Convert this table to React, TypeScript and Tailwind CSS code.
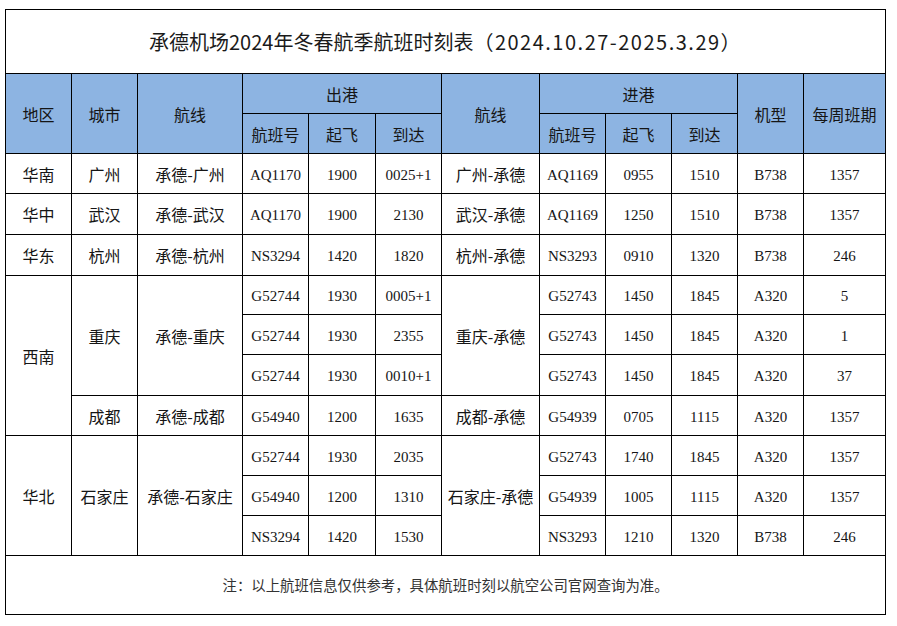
/**
 * 承德机场 冬春航季航班时刻表
 */
const zh = "[font-family:'Noto_Sans_CJK_SC',sans-serif] text-[16px]"
const num = "[font-family:'Liberation_Serif','Noto_Sans_CJK_SC',serif] text-[15px] pt-[3px]"
const cell = 'border border-black p-0 text-center align-middle text-[#151515] leading-none'

type Row = { h: number; cells: { t: string; rs?: number; n?: boolean; c?: string }[] }

const rows: Row[] = [
    { h: 40, cells: [{ t: '华南' }, { t: '广州', c: 'text-[#444]' }, { t: '承德-广州' }, { t: 'AQ1170', n: true }, { t: '1900', n: true }, { t: '0025+1', n: true }, { t: '广州-承德' }, { t: 'AQ1169', n: true }, { t: '0955', n: true }, { t: '1510', n: true }, { t: 'B738', n: true }, { t: '1357', n: true }] },
    { h: 41, cells: [{ t: '华中' }, { t: '武汉' }, { t: '承德-武汉' }, { t: 'AQ1170', n: true }, { t: '1900', n: true }, { t: '2130', n: true }, { t: '武汉-承德' }, { t: 'AQ1169', n: true }, { t: '1250', n: true }, { t: '1510', n: true }, { t: 'B738', n: true }, { t: '1357', n: true }] },
    { h: 41, cells: [{ t: '华东' }, { t: '杭州', c: 'text-[#444]' }, { t: '承德-杭州' }, { t: 'NS3294', n: true }, { t: '1420', n: true }, { t: '1820', n: true }, { t: '杭州-承德' }, { t: 'NS3293', n: true }, { t: '0910', n: true }, { t: '1320', n: true }, { t: 'B738', n: true }, { t: '246', n: true }] },
    { h: 39, cells: [{ t: '西南', rs: 4 }, { t: '重庆', rs: 3 }, { t: '承德-重庆', rs: 3 }, { t: 'G52744', n: true }, { t: '1930', n: true }, { t: '0005+1', n: true }, { t: '重庆-承德', rs: 3 }, { t: 'G52743', n: true }, { t: '1450', n: true }, { t: '1845', n: true }, { t: 'A320', n: true }, { t: '5', n: true }] },
    { h: 40, cells: [{ t: 'G52744', n: true }, { t: '1930', n: true }, { t: '2355', n: true }, { t: 'G52743', n: true }, { t: '1450', n: true }, { t: '1845', n: true }, { t: 'A320', n: true }, { t: '1', n: true }] },
    { h: 41, cells: [{ t: 'G52744', n: true }, { t: '1930', n: true }, { t: '0010+1', n: true }, { t: 'G52743', n: true }, { t: '1450', n: true }, { t: '1845', n: true }, { t: 'A320', n: true }, { t: '37', n: true }] },
    { h: 40, cells: [{ t: '成都' }, { t: '承德-成都' }, { t: 'G54940', n: true }, { t: '1200', n: true }, { t: '1635', n: true }, { t: '成都-承德' }, { t: 'G54939', n: true }, { t: '0705', n: true }, { t: '1115', n: true }, { t: 'A320', n: true }, { t: '1357', n: true }] },
    { h: 40, cells: [{ t: '华北', rs: 3 }, { t: '石家庄', rs: 3 }, { t: '承德-石家庄', rs: 3 }, { t: 'G52744', n: true }, { t: '1930', n: true }, { t: '2035', n: true }, { t: '石家庄-承德', rs: 3 }, { t: 'G52743', n: true }, { t: '1740', n: true }, { t: '1845', n: true }, { t: 'A320', n: true }, { t: '1357', n: true }] },
    { h: 40, cells: [{ t: 'G54940', n: true }, { t: '1200', n: true }, { t: '1310', n: true }, { t: 'G54939', n: true }, { t: '1005', n: true }, { t: '1115', n: true }, { t: 'A320', n: true }, { t: '1357', n: true }] },
    { h: 40, cells: [{ t: 'NS3294', n: true }, { t: '1420', n: true }, { t: '1530', n: true }, { t: 'NS3293', n: true }, { t: '1210', n: true }, { t: '1320', n: true }, { t: 'B738', n: true }, { t: '246', n: true }] },
]

const widths = [66, 66, 105, 66, 67, 66, 98, 66, 66, 66, 66, 82]

export default function App() {
    const th = `${cell} ${zh} bg-[#8db4e2] text-[#1c1c1c]`
    return (
        <div className="w-[897px] h-[626px] bg-white pl-[5px] pt-[9px]">
            <table className="w-[880px] table-fixed border-collapse border border-black">
                <colgroup>
                    {widths.map((w, i) => <col key={i} style={{ width: w }} />)}
                </colgroup>
                <tbody>
                    {/* 标题 */}
                    <tr className="h-[64px]">
                        <td colSpan={12} className="border border-black text-center align-middle text-[20px] text-[#1a1a1a] [font-family:'Noto_Sans_CJK_SC',sans-serif] leading-none">
                            承德机场2024年冬春航季航班时刻表<span className="tracking-[1.5px]">（2024.10.27-2025.3.29）</span>
                        </td>
                    </tr>
                    {/* 表头 */}
                    <tr className="h-[40px]">
                        <td rowSpan={2} className={th}>地区</td>
                        <td rowSpan={2} className={th}>城市</td>
                        <td rowSpan={2} className={th}>航线</td>
                        <td colSpan={3} className={th}>出港</td>
                        <td rowSpan={2} className={th}>航线</td>
                        <td colSpan={3} className={th}>进港</td>
                        <td rowSpan={2} className={th}>机型</td>
                        <td rowSpan={2} className={th}>每周班期</td>
                    </tr>
                    <tr className="h-[40px]">
                        <td className={th}>航班号</td>
                        <td className={th}>起飞</td>
                        <td className={th}>到达</td>
                        <td className={th}>航班号</td>
                        <td className={th}>起飞</td>
                        <td className={th}>到达</td>
                    </tr>
                    {/* 航班数据 */}
                    {rows.map((r, i) => (
                        <tr key={i} style={{ height: r.h }}>
                            {r.cells.map((c, j) => (
                                <td key={j} rowSpan={c.rs} className={`${cell} ${c.n ? num : zh} ${c.c ?? ''}`}>
                                    {c.t}
                                </td>
                            ))}
                        </tr>
                    ))}
                    {/* 备注 */}
                    <tr className="h-[59px]">
                        <td colSpan={12} className="border border-black text-center align-middle text-[14.4px] text-[#333] [font-family:'Noto_Sans_CJK_SC',sans-serif] leading-none">
                            注：以上航班信息仅供参考，具体航班时刻以航空公司官网查询为准。
                        </td>
                    </tr>
                </tbody>
            </table>
        </div>
    )
}
